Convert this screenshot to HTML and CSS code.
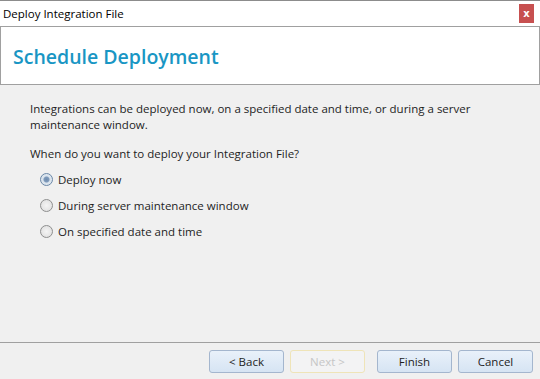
FILE: index.html
```html
<!DOCTYPE html>
<html lang="en">
<head>
  <meta charset="UTF-8">
  <title>Deploy Integration File</title>
  <link rel="stylesheet" href="styles.css">
</head>
<body>
  <div class="window">
    <div class="titlebar">
      <span class="title">Deploy Integration File</span>
      <button class="close" type="button">x</button>
    </div>

    <div class="header">
      <h1>Schedule Deployment</h1>
    </div>

    <div class="content">
      <p class="intro">Integrations can be deployed now, on a specified date and time, or during a server maintenance window.</p>
      <p class="question">When do you want to deploy your Integration File?</p>

      <div class="options">
        <label class="option"><input type="radio" name="when" checked> Deploy now</label>
        <label class="option"><input type="radio" name="when"> During server maintenance window</label>
        <label class="option"><input type="radio" name="when"> On specified date and time</label>
      </div>
    </div>

    <div class="footer">
      <button class="btn" type="button">&lt; Back</button>
      <button class="btn" type="button" disabled>Next &gt;</button>
      <button class="btn gap" type="button">Finish</button>
      <button class="btn" type="button">Cancel</button>
    </div>
  </div>
</body>
</html>
```

FILE: styles.css
```css
html, body {
  margin: 0;
  padding: 0;
}
body {
  font-family: "Open Sans", "Noto Sans", sans-serif;
  font-size: 11.5px;
  color: #1e1e1e;
  background: #f0f0f0;
}
.window {
  height: 379px;
  display: flex;
  flex-direction: column;
  border-top: 1px solid #8c8c8c;
  box-sizing: border-box;
}
.titlebar {
  height: 25px;
  background: #fff;
  display: flex;
  align-items: flex-start;
  justify-content: space-between;
}
.title {
  margin: 5px 0 0 3px;
  color: #000;
}
.close {
  margin: 3px 6px 0 0;
  width: 15px;
  height: 19px;
  padding: 0;
  border: none;
  background: #c75050;
  color: #fff;
  font-family: "DejaVu Sans", sans-serif;
  font-weight: bold;
  font-size: 10px;
  line-height: 17px;
}
.header {
  height: 57px;
  background: #fff;
  border: 1px solid #a0a0a0;
  display: flex;
  align-items: center;
  padding-left: 12px;
}
.header h1 {
  margin: 2px 0 0;
  font-size: 19.5px;
  font-weight: 600;
  color: #1996c4;
}
.content {
  flex: 1;
  padding: 16px 30px 0;
}
.intro {
  margin: 0;
  line-height: 16px;
  width: 480px;
}
.question {
  margin: 13px 0 0;
  line-height: 16px;
}
.options {
  margin: 9px 0 0 10px;
  display: flex;
  flex-direction: column;
  gap: 10px;
}
.option {
  display: flex;
  align-items: center;
  gap: 5px;
  height: 16px;
}
.option input {
  appearance: none;
  margin: 0;
  width: 13px;
  height: 13px;
  border-radius: 50%;
  border: 1px solid #8e8f8f;
  box-sizing: border-box;
  background: radial-gradient(circle, #f4f4f4 0, #dcdcdc 100%);
}
.option input:checked {
  border-color: #6a87a7;
  background: radial-gradient(circle, #6f8cae 0, #7e9abb 2.5px, #d8e2ec 3.5px, #e8edf2 100%);
}
.footer {
  height: 37px;
  box-sizing: border-box;
  border-top: 1px solid #a0a0a0;
  display: flex;
  justify-content: flex-end;
  align-items: flex-start;
  padding: 7px 7px 0 0;
  gap: 6px;
}
.btn {
  width: 75px;
  height: 23px;
  font-family: inherit;
  font-size: 11.5px;
  color: #1e1e1e;
  border: 1px solid #a4b6ce;
  border-radius: 3px;
  background: linear-gradient(#e9f1fa, #d6e4f3);
  padding: 0;
}
.btn:disabled {
  color: #c6c6c6;
  border-color: #efe4b8;
  background: #f3f3f4;
}
.btn.gap {
  margin-left: 6px;
}
```
